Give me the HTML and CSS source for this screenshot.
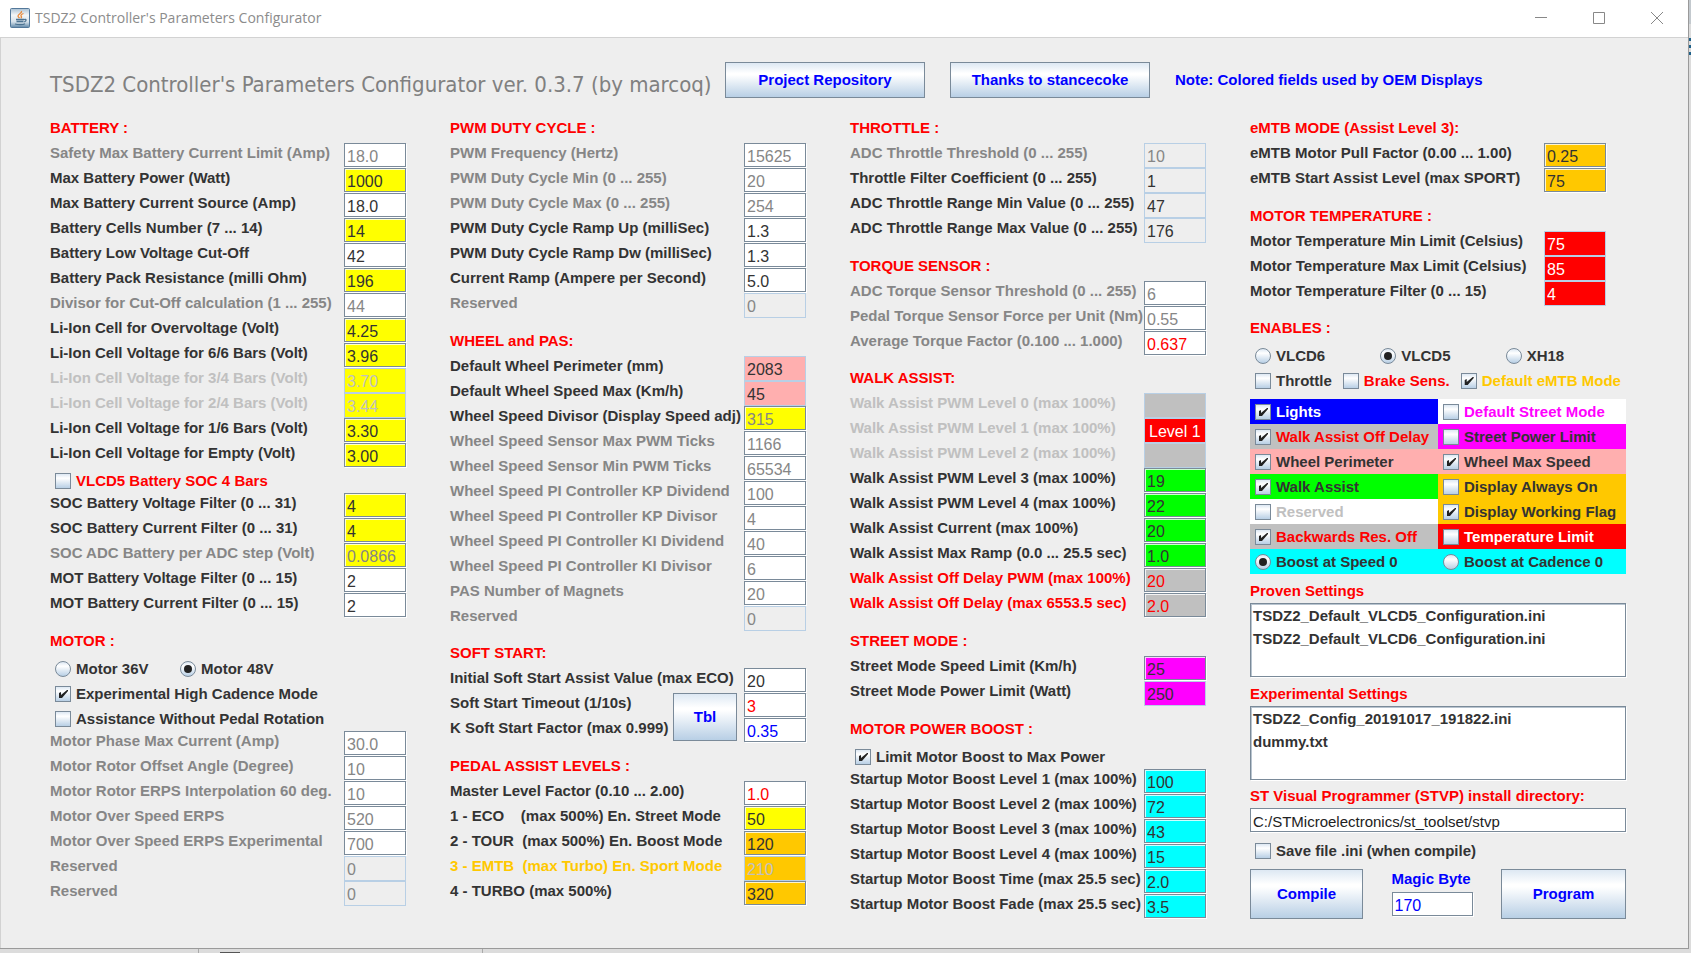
FILE: index.html
```html
<!DOCTYPE html>
<html lang="en">
<head>
<meta charset="utf-8">
<title>TSDZ2 Controller's Parameters Configurator</title>
<link rel="stylesheet" href="styles.css">
</head>
<body>
<div class="window">
<header class="titlebar">
<svg class="app-icon" viewBox="0 0 20 20" aria-hidden="true">
<defs><linearGradient id="tile" x1="0" y1="0" x2="0" y2="1"><stop offset="0" stop-color="#a9c0d3"/><stop offset=".35" stop-color="#f4f6f7"/><stop offset=".7" stop-color="#d5e1ea"/><stop offset="1" stop-color="#5f87a8"/></linearGradient></defs>
<rect x=".5" y=".5" width="19" height="19" rx="1" fill="url(#tile)" stroke="#53789a"/>
<path d="M11.5 3c1 2-3.500 3-3.500 5 0 1 1 1.500 1.500 2.200M13.500 5.500c-2 .8-3.300 1.800-2.200 3 .6.700 0 1.300-.6 1.700" fill="none" stroke="#e98a3c" stroke-width="1.300"/>
<path d="M6 11.500h8M6.500 13.500h7M5 16c3 1 8 1 10-.3M14 11.500c2.500-.8 3 1.300.3 2.300" fill="none" stroke="#4d7391" stroke-width="1.300"/>
</svg>
<span class="caption">TSDZ2 Controller's Parameters Configurator</span>
<div class="controls">
<button type="button" aria-label="Minimize"><svg viewBox="0 0 12 12"><path d="M0 5.500h12"/></svg></button>
<button type="button" aria-label="Maximize"><svg viewBox="0 0 12 12"><path d="M.5.5h11v11H.5z"/></svg></button>
<button type="button" aria-label="Close"><svg viewBox="0 0 12 12"><path d="M0 0l12 12M12 0L0 12"/></svg></button>
</div>
</header>

<main class="content">
<div class="top">
<h1>TSDZ2 Controller's Parameters Configurator ver. 0.3.7 (by marcoq)</h1>
<button type="button" class="btn">Project Repository</button>
<button type="button" class="btn">Thanks to stancecoke</button>
<p class="note">Note: Colored fields used by OEM Displays</p>
</div>

<form class="columns">
<div class="column">
<section>
<h2>BATTERY :</h2>
<label class="row dim"><span>Safety Max Battery Current Limit (Amp)</span><input value="18.0"></label>
<label class="row"><span>Max Battery Power (Watt)</span><input class="yellow" value="1000"></label>
<label class="row"><span>Max Battery Current Source (Amp)</span><input value="18.0"></label>
<label class="row"><span>Battery Cells Number (7 ... 14)</span><input class="yellow" value="14"></label>
<label class="row"><span>Battery Low Voltage Cut-Off</span><input value="42"></label>
<label class="row"><span>Battery Pack Resistance (milli Ohm)</span><input class="yellow" value="196"></label>
<label class="row dim"><span>Divisor for Cut-Off calculation (1 ... 255)</span><input value="44"></label>
<label class="row"><span>Li-Ion Cell for Overvoltage (Volt)</span><input class="yellow" value="4.25"></label>
<label class="row"><span>Li-Ion Cell Voltage for 6/6 Bars (Volt)</span><input class="yellow" value="3.96"></label>
<label class="row faint"><span>Li-Ion Cell Voltage for 3/4 Bars (Volt)</span><input class="off yellow" value="3.70" readonly></label>
<label class="row faint"><span>Li-Ion Cell Voltage for 2/4 Bars (Volt)</span><input class="off yellow" value="3.44" readonly></label>
<label class="row"><span>Li-Ion Cell Voltage for 1/6 Bars (Volt)</span><input class="yellow" value="3.30"></label>
<label class="row"><span>Li-Ion Cell Voltage for Empty (Volt)</span><input class="yellow" value="3.00"></label>
<label class="check red-text"><input type="checkbox">VLCD5 Battery SOC 4 Bars</label>
<label class="row"><span>SOC Battery Voltage Filter (0 ... 31)</span><input class="yellow" value="4"></label>
<label class="row"><span>SOC Battery Current Filter (0 ... 31)</span><input class="yellow" value="4"></label>
<label class="row dim"><span>SOC ADC Battery per ADC step (Volt)</span><input class="yellow" value="0.0866"></label>
<label class="row"><span>MOT Battery Voltage Filter (0 ... 15)</span><input value="2"></label>
<label class="row"><span>MOT Battery Current Filter (0 ... 15)</span><input value="2"></label>
</section>
<section>
<h2>MOTOR :</h2>
<div class="radios">
<label class="check"><input type="radio" name="motor">Motor 36V</label>
<label class="check"><input type="radio" name="motor" checked>Motor 48V</label>
</div>
<label class="check"><input type="checkbox" checked>Experimental High Cadence Mode</label>
<label class="check"><input type="checkbox">Assistance Without Pedal Rotation</label>
<label class="row dim"><span>Motor Phase Max Current (Amp)</span><input value="30.0"></label>
<label class="row dim"><span>Motor Rotor Offset Angle (Degree)</span><input value="10"></label>
<label class="row dim"><span>Motor Rotor ERPS Interpolation 60 deg.</span><input value="10"></label>
<label class="row dim"><span>Motor Over Speed ERPS</span><input value="520"></label>
<label class="row dim"><span>Motor Over Speed ERPS Experimental</span><input value="700"></label>
<label class="row dim"><span>Reserved</span><input class="off" value="0" readonly></label>
<label class="row dim"><span>Reserved</span><input class="off" value="0" readonly></label>
</section>
</div>

<div class="column">
<section>
<h2>PWM DUTY CYCLE :</h2>
<label class="row dim"><span>PWM Frequency (Hertz)</span><input value="15625"></label>
<label class="row dim"><span>PWM Duty Cycle Min (0 ... 255)</span><input value="20"></label>
<label class="row dim"><span>PWM Duty Cycle Max (0 ... 255)</span><input value="254"></label>
<label class="row"><span>PWM Duty Cycle Ramp Up (milliSec)</span><input value="1.3"></label>
<label class="row"><span>PWM Duty Cycle Ramp Dw (milliSec)</span><input value="1.3"></label>
<label class="row"><span>Current Ramp (Ampere per Second)</span><input value="5.0"></label>
<label class="row dim"><span>Reserved</span><input class="off" value="0" readonly></label>
</section>
<section>
<h2>WHEEL and PAS:</h2>
<label class="row"><span>Default Wheel Perimeter (mm)</span><input class="off pink" value="2083" readonly></label>
<label class="row"><span>Default Wheel Speed Max (Km/h)</span><input class="off pink" value="45" readonly></label>
<label class="row"><span>Wheel Speed Divisor (Display Speed adj)</span><input class="yellow dim-text" value="315"></label>
<label class="row dim"><span>Wheel Speed Sensor Max PWM Ticks</span><input value="1166"></label>
<label class="row dim"><span>Wheel Speed Sensor Min PWM Ticks</span><input value="65534"></label>
<label class="row dim"><span>Wheel Speed PI Controller KP Dividend</span><input value="100"></label>
<label class="row dim"><span>Wheel Speed PI Controller KP Divisor</span><input value="4"></label>
<label class="row dim"><span>Wheel Speed PI Controller KI Dividend</span><input value="40"></label>
<label class="row dim"><span>Wheel Speed PI Controller KI Divisor</span><input value="6"></label>
<label class="row dim"><span>PAS Number of Magnets</span><input value="20"></label>
<label class="row dim"><span>Reserved</span><input class="off" value="0" readonly></label>
</section>
<section>
<h2>SOFT START:</h2>
<label class="row"><span>Initial Soft Start Assist Value (max ECO)</span><input value="20"></label>
<div class="with-table">
<label for="timeout">Soft Start Timeout (1/10s)</label>
<button type="button" class="btn">Tbl</button>
<input id="timeout" class="red-text" value="3">
<label for="factor">K Soft Start Factor (max 0.999)</label>
<input id="factor" class="blue-text" value="0.35">
</div>
</section>
<section>
<h2>PEDAL ASSIST LEVELS :</h2>
<label class="row"><span>Master Level Factor (0.10 ... 2.00)</span><input class="red-text" value="1.0"></label>
<label class="row"><span>1 - ECO    (max 500%) En. Street Mode</span><input class="yellow" value="50"></label>
<label class="row"><span>2 - TOUR  (max 500%) En. Boost Mode</span><input class="orange" value="120"></label>
<label class="row orange-text"><span>3 - EMTB  (max Turbo) En. Sport Mode</span><input class="off orange faint-text" value="210" readonly></label>
<label class="row"><span>4 - TURBO (max 500%)</span><input class="orange" value="320"></label>
</section>
</div>

<div class="column">
<section>
<h2>THROTTLE :</h2>
<label class="row dim"><span>ADC Throttle Threshold (0 ... 255)</span><input class="off" value="10" readonly></label>
<label class="row"><span>Throttle Filter Coefficient (0 ... 255)</span><input class="off" value="1" readonly></label>
<label class="row"><span>ADC Throttle Range Min Value (0 ... 255)</span><input class="off" value="47" readonly></label>
<label class="row"><span>ADC Throttle Range Max Value (0 ... 255)</span><input class="off" value="176" readonly></label>
</section>
<section>
<h2>TORQUE SENSOR :</h2>
<label class="row dim"><span>ADC Torque Sensor Threshold (0 ... 255)</span><input value="6"></label>
<label class="row dim"><span>Pedal Torque Sensor Force per Unit (Nm)</span><input value="0.55"></label>
<label class="row dim"><span>Average Torque Factor (0.100 ... 1.000)</span><input class="red-text" value="0.637"></label>
</section>
<section>
<h2>WALK ASSIST:</h2>
<label class="row faint"><span>Walk Assist PWM Level 0 (max 100%)</span><input class="off silver" readonly></label>
<label class="row faint"><span>Walk Assist PWM Level 1 (max 100%)</span><input class="off red centered" value="Level 1" readonly></label>
<label class="row faint"><span>Walk Assist PWM Level 2 (max 100%)</span><input class="off silver" readonly></label>
<label class="row"><span>Walk Assist PWM Level 3 (max 100%)</span><input class="green" value="19"></label>
<label class="row"><span>Walk Assist PWM Level 4 (max 100%)</span><input class="green" value="22"></label>
<label class="row"><span>Walk Assist Current (max 100%)</span><input class="green" value="20"></label>
<label class="row"><span>Walk Assist Max Ramp (0.0 ... 25.5 sec)</span><input class="green" value="1.0"></label>
<label class="row red-text"><span>Walk Assist Off Delay PWM (max 100%)</span><input class="silver" value="20"></label>
<label class="row red-text"><span>Walk Assist Off Delay (max 6553.5 sec)</span><input class="silver" value="2.0"></label>
</section>
<section>
<h2>STREET MODE :</h2>
<label class="row"><span>Street Mode Speed Limit (Km/h)</span><input class="magenta" value="25"></label>
<label class="row"><span>Street Mode Power Limit (Watt)</span><input class="off magenta" value="250" readonly></label>
</section>
<section>
<h2>MOTOR POWER BOOST :</h2>
<label class="check"><input type="checkbox" checked>Limit Motor Boost to Max Power</label>
<label class="row"><span>Startup Motor Boost Level 1 (max 100%)</span><input class="cyan" value="100"></label>
<label class="row"><span>Startup Motor Boost Level 2 (max 100%)</span><input class="cyan" value="72"></label>
<label class="row"><span>Startup Motor Boost Level 3 (max 100%)</span><input class="cyan" value="43"></label>
<label class="row"><span>Startup Motor Boost Level 4 (max 100%)</span><input class="cyan" value="15"></label>
<label class="row"><span>Startup Motor Boost Time (max 25.5 sec)</span><input class="cyan" value="2.0"></label>
<label class="row"><span>Startup Motor Boost Fade (max 25.5 sec)</span><input class="cyan" value="3.5"></label>
</section>
</div>

<div class="column last">
<section class="narrow">
<h2>eMTB MODE (Assist Level 3):</h2>
<label class="row"><span>eMTB Motor Pull Factor (0.00 ... 1.00)</span><input class="orange" value="0.25"></label>
<label class="row"><span>eMTB Start Assist Level (max SPORT)</span><input class="orange" value="75"></label>
</section>
<section class="narrow">
<h2>MOTOR TEMPERATURE :</h2>
<label class="row"><span>Motor Temperature Min Limit (Celsius)</span><input class="off red" value="75" readonly></label>
<label class="row"><span>Motor Temperature Max Limit (Celsius)</span><input class="off red" value="85" readonly></label>
<label class="row"><span>Motor Temperature Filter (0 ... 15)</span><input class="off red" value="4" readonly></label>
</section>
<section>
<h2>ENABLES :</h2>
<div class="thirds">
<label class="check"><input type="radio" name="display">VLCD6</label>
<label class="check"><input type="radio" name="display" checked>VLCD5</label>
<label class="check"><input type="radio" name="display">XH18</label>
</div>
<div class="inline">
<label class="check"><input type="checkbox">Throttle</label>
<label class="check red-text"><input type="checkbox">Brake Sens.</label>
<label class="check orange-text"><input type="checkbox" checked>Default eMTB Mode</label>
</div>
<div class="options">
<label class="check blue"><input type="checkbox" checked>Lights</label>
<label class="check white magenta-text"><input type="checkbox">Default Street Mode</label>
<label class="check silver red-text"><input type="checkbox" checked>Walk Assist Off Delay</label>
<label class="check magenta"><input type="checkbox">Street Power Limit</label>
<label class="check pink"><input type="checkbox" checked>Wheel Perimeter</label>
<label class="check pink"><input type="checkbox" checked>Wheel Max Speed</label>
<label class="check green"><input type="checkbox" checked>Walk Assist</label>
<label class="check orange"><input type="checkbox">Display Always On</label>
<label class="check white faint"><input type="checkbox">Reserved</label>
<label class="check orange"><input type="checkbox" checked>Display Working Flag</label>
<label class="check silver red-text"><input type="checkbox" checked>Backwards Res. Off</label>
<label class="check red"><input type="checkbox">Temperature Limit</label>
<label class="check cyan"><input type="radio" name="boost" checked>Boost at Speed 0</label>
<label class="check cyan"><input type="radio" name="boost">Boost at Cadence 0</label>
</div>
<h3 id="proven">Proven Settings</h3>
<ul class="list" role="listbox" aria-labelledby="proven">
<li role="option">TSDZ2_Default_VLCD5_Configuration.ini</li>
<li role="option">TSDZ2_Default_VLCD6_Configuration.ini</li>
</ul>
<h3 id="experimental">Experimental Settings</h3>
<ul class="list" role="listbox" aria-labelledby="experimental">
<li role="option">TSDZ2_Config_20191017_191822.ini</li>
<li role="option">dummy.txt</li>
</ul>
<label class="path-label" for="path">ST Visual Programmer (STVP) install directory:</label>
<input id="path" class="path" value="C:/STMicroelectronics/st_toolset/stvp">
<label class="check save"><input type="checkbox">Save file .ini (when compile)</label>
<div class="actions">
<button type="button" class="btn compile">Compile</button>
<label class="magic">Magic Byte<input class="blue-text" value="170"></label>
<button type="button" class="btn program">Program</button>
</div>
</section>
</div>
</form>
</main>
</div>
</body>
</html>
```

FILE: styles.css
```css
* { box-sizing: border-box; }

body {
  margin: 0;
  min-height: 100vh;
  padding: 0 2px 4px 0;
  display: flex;
  color: #333;
  font: bold 15px/20px "Liberation Sans", Arial, sans-serif;
  background:
    linear-gradient(#1f6189, #1f6189) right 38px / 2px 3px no-repeat,
    linear-gradient(#1f6189, #1f6189) right 45px / 2px 3px no-repeat,
    linear-gradient(#1f6189, #1f6189) right 52px / 2px 3px no-repeat,
    linear-gradient(#c3c9ce, #c3c9ce) right top / 2px 24px no-repeat,
    linear-gradient(#555, #555) 220px bottom / 20px 1px no-repeat,
    linear-gradient(#aaa, #aaa) 198px bottom / 1px 4px no-repeat,
    linear-gradient(#aaa, #aaa) 482px bottom / 1px 4px no-repeat,
    #dcdcdc;
}

h1, h2, h3, p, ul { margin: 0; padding: 0; font: inherit; }

button { font: inherit; }

.window {
  flex: 1;
  display: flex;
  flex-direction: column;
  background: #eee;
  border: solid #9a9a9a;
  border-width: 0 1px 1px 0;
}

.titlebar {
  display: flex;
  align-items: center;
  height: 38px;
  padding: 0 2px 2px 10px;
  background: #fff;
  border-bottom: 1px solid #d2d2d2;
}

.app-icon { width: 20px; height: 20px; margin-right: 5px; }

.caption { flex: 1; color: #8c8c8c; font: 14px/20px "Open Sans", "Noto Sans", sans-serif; }

.controls { display: flex; }

.controls button {
  display: grid;
  place-items: center;
  width: 58px;
  height: 35px;
  padding: 0;
  border: 0;
  background: none;
}

.controls svg {
  width: 12px;
  height: 12px;
  fill: none;
  stroke: #888;
  overflow: visible;
}

.content {
  flex: 1;
  padding: 24px 62px 28px 49px;
  border-left: 1px solid #d2d2d2;
}

.top { display: flex; align-items: center; height: 36px; margin-bottom: 20px; }

.top h1 {
  flex: 0 0 675px;
  padding-top: 9px;
  white-space: nowrap;
  color: #808080;
  font: 22px/28px "DejaVu Sans Condensed", "DejaVu Sans", sans-serif;
  font-stretch: condensed;
}

.btn {
  padding: 0;
  color: #00f;
  border: 1px solid #7a8a99;
  background: linear-gradient(#dde8f3, #fff 30%, #fff 35%, #b8cfe5);
}

.top .btn { flex: 0 0 200px; height: 36px; margin-right: 25px; }

.note { color: #00f; white-space: nowrap; }

.columns {
  display: grid;
  grid-template-columns: repeat(3, minmax(0, 400fr)) minmax(0, 376fr);
}

.column { padding-right: 44px; }
.last { padding-right: 0; }
.narrow { padding-right: 20px; }

section + section { margin-top: 13px; }
section:nth-of-type(3) { margin-top: 12px; }

h2 { height: 25px; color: #f00; }

.row { display: flex; height: 25px; white-space: pre; }
.row span { flex: 1; min-width: 0; }

input {
  flex: none;
  width: 62px;
  height: 24px;
  margin: 0;
  padding: 3px 0 0 2px;
  color: inherit;
  font: 16px/20px "Liberation Sans", Arial, sans-serif;
  background: #fff;
  border: 1px solid #7a8a99;
  border-radius: 0;
  outline: 0;
  box-shadow: inset 1px 1px 0 rgba(255, 255, 255, .8), 1px 1px 0 #fff;
}

.off { height: 25px; background: #eee; border-color: #b8cfe5; box-shadow: none; }

.centered { padding-left: 4px; }

.dim, .dim-text { color: #868686; }
.faint, .faint-text { color: #c0c0c0; }
.red-text, .silver { color: #f00; }
.blue-text { color: #00f; }
.orange-text { color: #ffc800; }

.yellow { background: #ff0; }
.orange { background: #ffc800; }
.pink { background: #ffafaf; }
.green { background: #0f0; }
.cyan { background: #0ff; }
.silver { background: #c0c0c0; }
.magenta { background: #f0f; }
.white { background: #fff; }
.blue { color: #fff; background: #00f; }
.red { color: #fff; background: #f00; }
.magenta-text { color: #f0f; }

.check {
  display: flex;
  align-items: center;
  height: 25px;
  padding: 1px 0 0 5px;
  gap: 5px;
  white-space: nowrap;
}

.check input {
  appearance: none;
  width: 16px;
  height: 16px;
  padding: 0;
  background: linear-gradient(#dde8f3, #fff 30%, #b8cfe5);
  box-shadow: none;
}

.check input[type="radio"] {
  display: grid;
  place-items: center;
  border-radius: 50%;
}

.check input:checked::before { content: ""; display: block; background: #222; }

.check input[type="checkbox"]:checked::before {
  width: 14px;
  height: 14px;
  clip-path: polygon(3px 6px, 5px 5px, 5px 8px, 11px 3px, 12px 3px, 12px 4px, 6px 11px, 3px 11px);
}

.check input[type="radio"]:checked::before { width: 8px; height: 8px; border-radius: 50%; }

.radios { display: flex; }
.radios .check { width: 125px; }

.with-table {
  display: grid;
  grid-template-columns: minmax(0, 1fr) 64px 62px;
  grid-auto-rows: 25px;
  column-gap: 7px;
  white-space: nowrap;
}

.with-table .btn { grid-area: 1 / 2 / span 2; height: 48px; }
.with-table label { grid-column: 1; }
.with-table input { grid-column: 3; }

.thirds { display: grid; grid-template-columns: repeat(3, 1fr); }

.inline { display: flex; gap: 6px; margin-bottom: 6px; }

.options { display: grid; grid-template-columns: 1fr 1fr; }

h3, .path-label { display: block; color: #f00; height: 20px; }
h3 { margin-top: 7px; }

.list {
  height: 74px;
  margin-top: 2px;
  padding: 1px 2px;
  list-style: none;
  background: #fff;
  border: 1px solid #7a8a99;
  box-shadow: inset 1px 1px 0 #b8c4cf, 1px 1px 0 #fff;
}

.list li { height: 23px; line-height: 22px; }

.path-label { margin-top: 6px; }

.path { width: 100%; margin-top: 2px; color: #222; font-size: 15px; }

.save { margin: 6px 0; }

.actions { display: flex; justify-content: space-between; align-items: flex-start; height: 50px; }
.actions .btn { height: 50px; }
.compile { width: 113px; }
.program { width: 125px; }

.magic { display: flex; flex-direction: column; gap: 3px; color: #00f; }
.magic input { width: 81px; }
```
